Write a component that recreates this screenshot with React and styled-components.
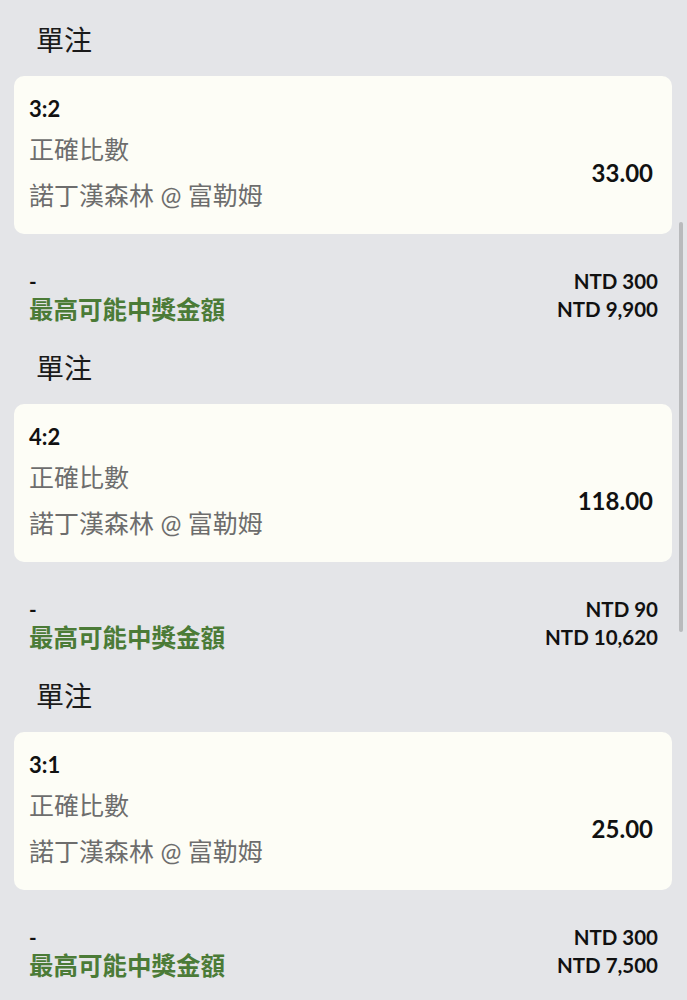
import React from "react";
import styled, { createGlobalStyle } from "styled-components";

const GlobalStyle = createGlobalStyle`
  body {
    margin: 0;
    background: #e4e5e8;
    font-family: Lato, "Noto Sans CJK TC", sans-serif;
    color: #111;
  }
`;

const Page = styled.div`
  padding: 0 15px 0 14px;
  background: #e4e5e8;
  min-height: 1000px;
`;

const Section = styled.section`
  display: flex;
  flex-direction: column;
`;

const Title = styled.h2`
  margin: 0;
  padding: 23px 0 19px 22px;
  font-size: 28px;
  line-height: 34px;
  font-weight: 400;
  color: #1a1a1a;
`;

const Card = styled.div`
  display: flex;
  justify-content: space-between;
  background: #fdfdf6;
  border-radius: 10px;
  padding: 18px 19px 21px 15px;
`;

const Info = styled.div`
  display: flex;
  flex-direction: column;
`;

const Selection = styled.div`
  font-size: 22px;
  line-height: 30px;
  font-weight: 700;
  color: #111;
`;

const Line = styled.div`
  font-size: 25px;
  line-height: 36px;
  color: #6d6d6d;
  margin-top: ${(p) => p.$gap}px;
`;

const Odds = styled.div`
  align-self: center;
  margin-top: 38px;
  font-size: 24px;
  line-height: 30px;
  font-weight: 700;
  color: #111;
`;

const Footer = styled.div`
  display: flex;
  justify-content: space-between;
  padding: 33px 14px 3px 15px;
`;

const Col = styled.div`
  display: flex;
  flex-direction: column;
  align-items: ${(p) => (p.$right ? "flex-end" : "flex-start")};
`;

const Amount = styled.div`
  font-size: 20.5px;
  line-height: 28px;
  font-weight: 700;
  color: #111;
`;

const MaxWin = styled.div`
  font-size: 24.5px;
  line-height: 30px;
  font-weight: 700;
  color: #4b7b37;
`;

const ScrollThumb = styled.div`
  position: fixed;
  top: 222px;
  right: 4px;
  width: 4px;
  height: 410px;
  border-radius: 2px;
  background: #b9babc;
`;

const bets = [
  { score: "3:2", odds: "33.00", stake: "NTD 300", win: "NTD 9,900" },
  { score: "4:2", odds: "118.00", stake: "NTD 90", win: "NTD 10,620" },
  { score: "3:1", odds: "25.00", stake: "NTD 300", win: "NTD 7,500" },
];

const BetSlip = ({ bet }) => (
  <Section>
    <Title>單注</Title>
    <Card>
      <Info>
        <Selection>{bet.score}</Selection>
        <Line $gap={7}>正確比數</Line>
        <Line $gap={10}>諾丁漢森林 @ 富勒姆</Line>
      </Info>
      <Odds>{bet.odds}</Odds>
    </Card>
    <Footer>
      <Col>
        <Amount>-</Amount>
        <MaxWin>最高可能中獎金額</MaxWin>
      </Col>
      <Col $right>
        <Amount>{bet.stake}</Amount>
        <Amount>{bet.win}</Amount>
      </Col>
    </Footer>
  </Section>
);

const App = () => (
  <>
    <GlobalStyle />
    <Page>
      {bets.map((bet) => (
        <BetSlip key={bet.score} bet={bet} />
      ))}
    </Page>
    <ScrollThumb />
  </>
);

export default App;
